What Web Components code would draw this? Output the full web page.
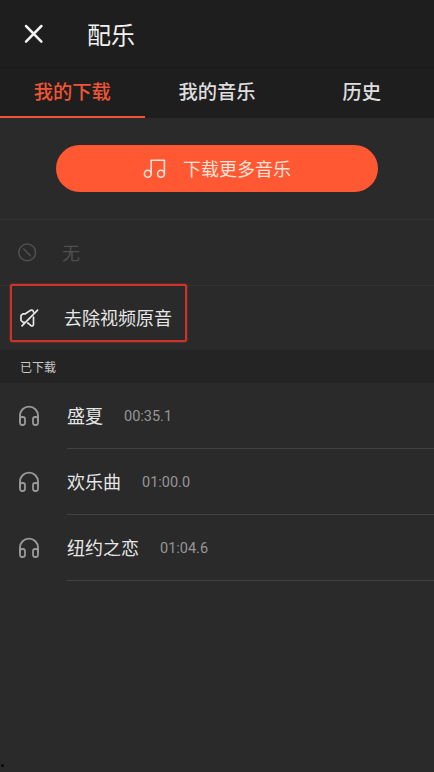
<!DOCTYPE html>
<html lang="zh-CN">
<head>
<meta charset="utf-8">
<title>配乐</title>
<style>
html,body{margin:0;background:#2a2a2a}
body{font-family:Roboto,"Noto Sans CJK SC",sans-serif;color:#e6e6e6}
</style>
</head>
<body>
<music-page></music-page>
<script>
const define = (name, html) => {
  const tpl = document.createElement('template');
  tpl.innerHTML = html;
  customElements.define(name, class extends HTMLElement {
    constructor() {
      super();
      this.attachShadow({mode: 'open'}).append(tpl.content.cloneNode(true));
    }
  });
};

const icons = {
  close: [20, 20, '<path d="M2 2 17.4 17.6M17.4 2 2 17.6" stroke-width="2.5"/>'],
  note: [24, 22, '<path d="M8.2 15.8V2.2H21.4V15.8" stroke-width="1.6"/><ellipse cx="4.8" cy="15.8" rx="3.4" ry="3.5" stroke-width="1.6"/><ellipse cx="18" cy="15.8" rx="3.4" ry="3.5" stroke-width="1.6"/>'],
  none: [20, 20, '<circle cx="10.2" cy="9.4" r="8.4" stroke-width="1.5"/><path d="M6.8 5.9 13.3 12.6" stroke-width="1.5"/>'],
  mute: [20, 20, '<path d="M18.6 2.2 3 17.8M5.4 14.4H4.2L2 12.4V7.4L4.2 5.8H6.4L11.4 2.4Q14 1.4 14.4 3.8M8.8 15 11.7 17.4Q14.5 18.8 14.5 16V9.2" stroke-width="1.7"/>'],
  headphones: [22, 22, '<path d="M2 16V10.6A9 9 0 0 1 20 10.6V16" stroke-width="1.9"/><rect x="2" y="12" width="5" height="8" rx="2.2" stroke-width="1.8"/><rect x="15" y="12" width="5" height="8" rx="2.2" stroke-width="1.8"/>']
};
customElements.define('ui-icon', class extends HTMLElement {
  constructor() {
    super();
    this.attachShadow({mode: 'open'});
  }
  connectedCallback() {
    const [w, h, body] = icons[this.getAttribute('name')];
    this.shadowRoot.innerHTML = `<style>:host{display:block;flex:none}svg{display:block}</style>
      <svg width="${w}" height="${h}" viewBox="0 0 ${w} ${h}" fill="none" stroke="currentColor" stroke-linecap="round" stroke-linejoin="round">${body}</svg>`;
  }
});

define('app-bar', `<style>
:host{display:flex;align-items:center;box-sizing:border-box;height:68px;padding:1px 0 0 24px;gap:43px;background:#1e1e1e;border-bottom:1px solid #1a1a1a;color:#f2f2f2;font-size:24px;line-height:36px}
span{padding-top:3px}
</style><ui-icon name="close"></ui-icon><span><slot></slot></span>`);

define('tab-item', `<style>
:host{display:flex;flex:1;justify-content:center;box-sizing:border-box;height:50px;padding-top:10px;border-bottom:2px solid transparent;font-size:19.3px;line-height:30px;font-weight:500;color:#dedede}
:host([active]){color:#ee5535;border-color:#ee5535}
</style><slot></slot>`);

define('tab-bar', `<style>:host{display:flex;background:#1e1e1e}</style><slot></slot>`);

define('pill-button', `<style>
:host{display:flex;align-items:center;box-sizing:border-box;height:47px;padding-left:87px;gap:16px;border-radius:24px;background:#ff5833;color:#ffe2da;font-size:18px;line-height:26px}
span{padding-top:2px}
</style><ui-icon name="note"></ui-icon><span><slot></slot></span>`);

define('option-row', `<style>
:host{display:flex;align-items:center;box-sizing:border-box;height:66px;border-top:1px solid #333;padding:0 0 0 17px;font-size:18px;line-height:26px;gap:25px}
span{padding-top:2px}
:host([disabled]){color:#505050}
:host([marked]){height:65px;padding-left:19px;position:relative}
:host([marked])::after{content:"";position:absolute;left:10px;top:-2px;width:173px;height:54px;border:2px solid #cc332b;border-radius:2px;box-shadow:0 0 0 .5px #cc332b80}
</style><slot name="icon"></slot><span><slot></slot></span>`);

define('section-title', `<style>
:host{display:flex;align-items:center;box-sizing:border-box;height:33px;padding:2px 0 0 20px;background:#242424;color:#c8c8c8;font-size:12px;line-height:18px}
</style><slot></slot>`);

define('track-row', `<style>
:host{display:flex;height:66px;padding-left:18px;gap:27px}
ui-icon{color:#999;margin-top:22px}
div{flex:1;display:flex;align-items:center;box-sizing:border-box;padding-top:2px;border-bottom:1px solid #414141;gap:21px;font-size:18px;line-height:26px}
.time{font-size:14.5px;color:#969696;padding-top:1px}
</style><ui-icon name="headphones"></ui-icon><div><span><slot></slot></span><span class="time"><slot name="time"></slot></span></div>`);

define('music-page', `<style>
:host{display:flex;flex-direction:column;width:434px;height:772px;background:#2a2a2a;overflow:hidden;position:relative}
.hero{padding:27px 56px}
.speck{position:absolute;left:1px;top:764px;width:3px;height:3px;border-radius:50%;background:#080808}
</style>
<app-bar>配乐</app-bar>
<tab-bar><tab-item active>我的下载</tab-item><tab-item>我的音乐</tab-item><tab-item>历史</tab-item></tab-bar>
<div class="hero"><pill-button>下载更多音乐</pill-button></div>
<option-row disabled><ui-icon slot="icon" name="none"></ui-icon>无</option-row>
<option-row marked><ui-icon slot="icon" name="mute"></ui-icon>去除视频原音</option-row>
<section-title>已下载</section-title>
<track-row>盛夏<span slot="time">00:35.1</span></track-row>
<track-row>欢乐曲<span slot="time">01:00.0</span></track-row>
<track-row>纽约之恋<span slot="time">01:04.6</span></track-row>
<div class="speck"></div>`);
</script>
</body>
</html>
